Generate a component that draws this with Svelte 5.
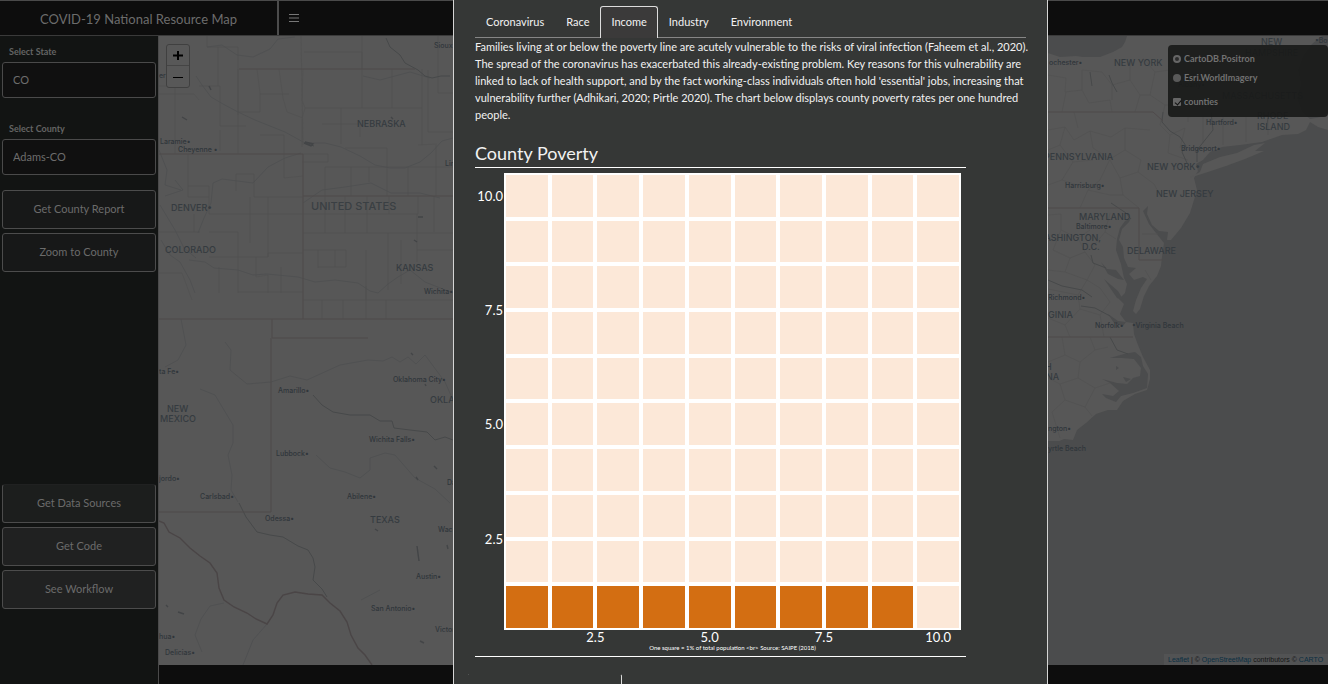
<script>
  const tabs = ['Coronavirus', 'Race', 'Income', 'Industry', 'Environment'];
  let active = $state('Income');

  const cells = Array.from({ length: 100 }, (_, i) => i >= 90 && i < 99);
  const yTicks = [['10.0', 1], ['7.5', 6], ['5.0', 11], ['2.5', 16]];
  const xTicks = [['2.5', 4], ['5.0', 9], ['7.5', 14], ['10.0', 19]];

  // [text, x, y, kind]
  const labels = [
    ['Sioux', 434, 48, 'city'],
    ['er•', 159, 78, 'city'],
    ['NEBRASKA', 357, 127, 'state'],
    ['Laramie•', 160, 144, 'city'],
    ['Cheyenne •', 178, 152, 'city'],
    ['Lincoln', 445, 166, 'city'],
    ['UNITED STATES', 311, 210, 'country'],
    ['DENVER•', 171, 211, 'state'],
    ['COLORADO', 165, 253, 'state'],
    ['KANSAS', 396, 271, 'state'],
    ['Wichita•', 424, 294, 'city'],
    ['ta Fe•', 159, 374, 'city'],
    ['Amarillo•', 278, 393, 'city'],
    ['Oklahoma City•', 393, 382, 'city'],
    ['OKLAHOMA', 430, 403, 'state'],
    ['NEW', 167, 412, 'state'],
    ['MEXICO', 160, 422, 'state'],
    ['Wichita Falls•', 369, 442, 'city'],
    ['Lubbock•', 276, 456, 'city'],
    ['jordo•', 159, 481, 'city'],
    ['Carlsbad•', 200, 499, 'city'],
    ['Abilene•', 347, 499, 'city'],
    ['Dallas', 447, 485, 'city'],
    ['Odessa•', 265, 521, 'city'],
    ['TEXAS', 370, 523, 'state'],
    ['Waco', 438, 532, 'city'],
    ['Austin•', 416, 579, 'city'],
    ['San Antonio•', 371, 611, 'city'],
    ['Victoria', 435, 632, 'city'],
    ['hua•', 159, 639, 'city'],
    ['Delicias•', 165, 655, 'city'],
    ['ochester•', 1049, 65, 'city'],
    ['NEW YORK', 1114, 66, 'state'],
    ['NEW', 1261, 45, 'state'],
    ['HAMPSHIRE', 1245, 56, 'state'],
    ['•Boston', 1315, 43, 'city'],
    ['Albany•', 1178, 87, 'city'],
    ['MASSACHUSETTS', 1222, 99, 'state'],
    ['RHODE', 1257, 119, 'state'],
    ['ISLAND', 1257, 130, 'state'],
    ['Hartford•', 1206, 125, 'city'],
    ['Bridgeport•', 1181, 151, 'city'],
    ['PENNSYLVANIA', 1044, 160, 'state'],
    ['NEW YORK•', 1147, 170, 'state'],
    ['Harrisburg•', 1065, 188, 'city'],
    ['NEW JERSEY', 1156, 197, 'state'],
    ['MARYLAND', 1079, 220, 'state'],
    ['Baltimore•', 1076, 229, 'city'],
    ['WASHINGTON,', 1036, 241, 'state'],
    ['D.C.', 1082, 250, 'state'],
    ['DELAWARE', 1127, 254, 'state'],
    ['Richmond•', 1048, 300, 'city'],
    ['GINIA', 1048, 318, 'state'],
    ['Norfolk•', 1095, 328, 'city'],
    ['•Virginia Beach', 1132, 328, 'city'],
    ['H', 1045, 370, 'state'],
    ['NA', 1046, 380, 'state'],
    ['ngton•', 1048, 431, 'city'],
    ['yrtle Beach', 1048, 451, 'city']
  ];
</script>

<div class="app">
  <header>
    <h1>COVID-19 National Resource Map</h1>
    <button class="menu" aria-label="Toggle sidebar">
      <svg viewBox="0 0 10 8" width="10" height="8"><path d="M0 .5H10M0 4H10M0 7.5H10" /></svg>
    </button>
  </header>

  <div class="body">
    <aside>
      <label for="state">Select State</label>
      <select id="state"><option>CO</option></select>
      <label for="county">Select County</label>
      <select id="county"><option>Adams-CO</option></select>
      <div class="stack">
        <button>Get County Report</button>
        <button>Zoom to County</button>
      </div>
      <div class="stack low">
        <button>Get Data Sources</button>
        <button>Get Code</button>
        <button>See Workflow</button>
      </div>
    </aside>

    <main>
      <svg class="map" viewBox="159 36 1169 629" preserveAspectRatio="xMinYMin slice">
        <rect x="159" y="36" width="1169" height="629" fill="#4b4c4d" />
        <path
          class="land"
          d="M159 36H1048V53L1060 57L1076 56L1083 57L1100 57L1113 52L1122 47L1125 42L1127 36H1322L1312 44L1303 56L1298 70L1301 84L1297 98L1302 112L1310 119L1321 117L1328 112V130L1318 127L1310 122L1306 130L1298 134L1282 135L1262 142L1240 145L1222 147L1210 152L1203 160L1196 164L1198 171L1194 178L1197 190L1194 200L1190 213L1181 228L1171 240L1167 240L1168 232L1159 231L1152 225L1147 214L1148 206L1143 211L1149 224L1156 233L1164 243L1162 257L1161 266L1157 276L1149 286L1144 296L1140 309L1136 314L1133 311L1136 300L1141 288L1147 279L1143 277L1134 280L1129 274L1136 268L1128 267L1124 258L1123 247L1119 240L1122 229L1129 222L1131 218L1125 221L1120 228L1117 239L1116 250L1121 264L1124 278L1127 284L1125 293L1119 299L1124 304L1120 314L1126 322L1133 323L1134 334L1138 345L1143 357L1150 370L1150 379L1147 390L1135 394L1123 401L1117 410L1108 410L1096 414L1086 423L1077 430L1073 440L1064 439L1055 443L1048 441V665H159Z"
        />
        <path class="land" d="M1189 178L1200 172L1203 164L1220 157L1237 153L1254 145L1265 143L1255 151L1264 151L1245 159L1226 166L1208 172Z" />
        <path
          class="water"
          d="M1110 358L1124 354L1135 352L1141 357L1143 366L1148 374L1147 388L1133 393L1121 396L1116 402L1106 398L1102 394L1113 396L1119 391L1110 383L1102 379L1117 383L1127 384L1133 378L1140 376L1141 368L1134 359L1122 358ZM1123 377L1131 379L1126 382ZM1116 366L1119 368L1116 370ZM1101 262L1107 269L1116 270L1124 280L1118 279L1108 274ZM1104 279L1118 291L1124 301L1117 298ZM1108 314L1118 321L1126 322L1123 326L1114 323Z"
        />
        <rect x="1048" y="441" width="280" height="224" fill="#4b4c4d" />

        <path
          class="tract"
          d="M207 36V47H238M238 47V115M159 86H175V154M159 94H194L199 100M218 47V86M199 86H220V126H246M220 130V151M238 69V154M257 69L260 93V112H238M279 69L283 98L287 112L303 118M260 94H289M260 135H284V154M304 52H362V69M301 36L303 145M362 36V69M303 69L302 100L305 108H422V69M305 108L302 119V147M341 108V144M322 124H360V137M362 69V108M392 69V108M345 148H387V167M422 108V145M303 154H328V162H302M325 167V196M351 167V196M369 167V182M387 167V196M408 167V196M438 36V93M438 93H453M428 70V132H453M436 145V196M418 145L437 144M325 167H453M303 214H418V196M325 196V233M345 196V233M367 196V233M389 196V214M303 233H453M417 214V262M434 196V232M318 250V268M335 250V267M303 250H346V267H318M366 250V300M388 233V290M401 240V284M417 250H453M303 300H453M322 300V319M343 300V319M366 286V319M386 300V319M188 154V186H209M236 174V191M236 174H254V197H303M284 154V178L303 176M188 186V197H209M209 186V214H303M250 197V243M194 214V232M209 232H238V293M159 232H200M209 257H268V253H303M256 257V277L268 275V293M238 292H303M268 197V257M281 267V293M159 273H182L192 300M219 267V293M274V267H303M175 293L186 302V319M197 300V348M198 349L238 350V319M240 319V349M260 355V384M195 365H224L245 385H271M177 319V352M169 365V396H199V426H167M199 400L220 393L237 389V413H271M159 413V426M212 414V469H198V462H185V459M212 413H236M212 436H271M180 426V447L176 462V500M246 436L246 452L271 453M159 456H166V500M198 469V510M214 476V492H271M231 476H271M249 452V476M299 338V425M334 338V412M350 338V395M271 357H367V424M271 374H341M271 390H350M271 408H334M341 374V390M299 425H271M285 407V425M317 407V425M334 390V425H402M317 425V529M341 425V525M350 425V470M360 425V520M385 425V510M271 442H453M302 442V460M271 460H420M292 460V478M271 478H385M271 496H453M271 510H350M285 510V526H303M329 510V538H346V547M303 510V547H360M367 424V440M385 442V425M368 319V395H403V380M390 340V385M404 319V365M421 319V366M368 335H453M368 352H420M385 360V412M393 345H453M368 368H403M372 405H402V417M418 405V431M430 420V440M402 442V510M420 442V500M438 440V496M385 496V526H420M402 510V527H418V547H385M361 520V580M341 547V567H360M361 547H398V567M379 547V573M360 567H402V580H372M390 570V581H413M347 600V665M387 600V665M347 620H405M347 636H387M360 653H387M405 620V653H387M418 547L430 560L420 575L402 580M402 580L413 600H453M430 560L453 555M413 600L405 620L420 640L412 650L430 665M420 575L430 590L453 587M430 527L440 540L430 550M404 600L427 608L437 625L453 617M420 510L431 525L453 518M438 496L427 510L440 527M177 513V530M238 513V547L213 566M213 566L248 572V613M213 562L238 547L256 558L278 572L294 555V537M256 558L278 546M294 566H308M278 572L313 580M361 580L347 600H330"
        />
        <path
          class="tract"
          d="M1048 75L1066 78L1065 92L1082 90V70L1102 72L1112 85L1130 80V60M1082 90L1089 103L1110 100L1112 112M1066 92L1062 112M1130 80L1140 95L1135 112M1112 85V100M1143 58L1155 72L1170 70M1155 72L1150 95L1165 105L1160 125M1140 95H1150M1048 130L1065 127L1074 140L1090 131L1111 137L1125 128L1150 130M1074 112L1078 128M1065 127L1060 145L1048 150M1090 131L1093 148L1110 159L1125 150V128M1110 159L1100 180L1088 190L1080 208M1125 150L1141 160L1138 172L1120 178L1110 160M1138 172L1154 184L1160 195M1120 178L1123 195L1139 208M1088 190L1110 195L1123 195M1060 145L1073 162L1062 180L1048 185M1073 162L1093 160M1062 180L1080 186M1165 105H1188V122M1170 70L1178 90M1188 117L1215 113M1203 113V143M1223 113V145M1160 125L1170 135L1185 128L1180 148M1170 135L1168 153L1188 160M1246 110V142M1268 107V135M1205 65L1210 80M1048 215L1061 214V230L1078 238L1090 230M1061 230L1053 250L1070 258L1065 272L1048 270M1070 258L1085 252L1095 265L1087 280L1065 272M1078 238L1085 252M1110 213L1105 232L1116 239M1105 232L1090 250M1087 280L1100 288L1110 302L1100 315L1080 309L1078 295L1087 280M1048 289L1078 295M1100 315L1104 337M1080 309L1065 325L1070 337M1048 318L1065 325M1062 337L1065 355L1080 362L1095 350L1090 337M1080 362L1078 378L1095 388L1110 383M1065 355L1048 362M1078 378L1060 384L1048 378M1060 384L1065 400L1085 407L1095 388M1065 400L1052 412L1060 438M1085 407L1092 416M1095 350L1108 347M1142 234H1158M1145 270L1151 280"
        />
        <path
          class="creek"
          d="M159 150L167 170L165 185L181 190M175 180L183 190L165 196M160 205L175 230L184 248L196 258M161 240L170 255L180 262L190 280L195 293M198 233L204 218L211 203L213 183L222 179L253 183L268 167L285 158L301 153M189 260L205 262L214 268L238 270L253 275L267 274L298 277L315 282L335 280L358 283L370 291L378 293L388 284L398 277L410 270L425 282L453 293M303 203L322 190L345 187L371 183L391 193L420 193L440 198M196 76L202 85L211 97L223 104L238 112L255 120L270 126L285 132L305 143L325 143L341 147L360 156L375 165L390 168L405 168L420 162L431 153L442 141L453 138M181 319L186 345L178 360L165 367M225 342L231 350L230 370L247 384L271 382L290 376L307 380L340 365L368 360L383 361L392 357L400 362L408 357L416 364L425 355L445 382L453 400M200 389L215 395L221 405L233 425L233 443L228 455L232 475L231 490L238 502M316 455L330 468L345 472L360 478L370 470L370 458L385 453L395 455L415 478L435 489L450 503M207 47L222 45L237 55L253 57L270 49L278 39L295 37M363 76L380 80L410 72L430 78M224 603L210 606L201 619L195 635L202 652M267 624L253 640L243 665M361 600L380 590"
        />
        <path
          class="river"
          d="M386 38L390 47L400 55L405 63L418 70L425 76L432 78L441 76L450 76M239 503L246 517L257 532L270 535L283 537L298 546L308 550L313 558L315 567L313 580L322 589L327 597M313 395L322 405L333 412L350 415L370 415L380 421L392 421L394 428L410 430L427 432L435 440L445 437L453 440M305 143L314 146M1163 112L1162 122L1170 131L1180 137L1186 146L1182 152L1187 163M1111 203L1126 213L1131 219M1091 255L1093 263L1106 268M1048 280L1062 286L1082 290L1092 297M1081 306L1095 308L1110 316M1110 337L1117 350L1128 354M1109 75L1112 83L1117 92M1090 72L1092 86M1211 112L1213 130L1197 150L1197 162M1268 118L1266 130"
        />
        <path
          class="lake"
          d="M464 144L470 147M305 142L313 144L311 146L304 143M182 117L187 120M411 353L413 355M425 384L426 386M434 466L437 469M416 477L418 480M417 546L419 561M375 529L378 531M178 612L184 614M166 605L168 607M420 641L424 643M447 545L448 549M418 217H423M414 240L417 242M209 86L211 90M391 117L393 119"
        />
        <path class="border" d="M239 69H415M159 154H303V196H453M303 196V319M159 319H453M272 319V338M272 338H368M271 338V512H159M1048 112H1153L1163 121M1048 208H1139V260H1163M1048 337H1133" />
        <path
          class="rio"
          d="M159 521L164 523L169 532L180 538L190 548L200 556L210 563L217 573L219 588L224 600L234 607L247 613L256 619L267 624L273 615L277 603L283 595L295 592L308 594L322 595L330 603L340 611L347 622L351 635L358 648L365 655L372 665"
        />
        {#each labels as [text, x, y, kind]}
          <text class={kind} {x} {y}>{text}</text>
        {/each}
      </svg>

      <div class="zoom">
        <button aria-label="Zoom in"><svg viewBox="0 0 10 10" width="10" height="10"><path d="M5 1V10M0 5.5H10" /></svg></button>
        <button aria-label="Zoom out"><svg viewBox="0 0 10 10" width="10" height="10"><path class="thin" d="M0 5.5H10" /></svg></button>
      </div>

      <form class="layers">
        <label><input type="radio" name="base" checked />CartoDB.Positron</label>
        <label><input type="radio" name="base" />Esri.WorldImagery</label>
        <label class="over"><input type="checkbox" checked />counties</label>
      </form>

      <p class="credit"><a href="#leaflet">Leaflet</a> | © <a href="#osm">OpenStreetMap</a> contributors © <a href="#carto">CARTO</a></p>
    </main>
  </div>

  <div class="overlay">
    <section class="report">
      <nav>
        {#each tabs as tab}
          <button class:active={tab === active} onclick={() => (active = tab)}>{tab}</button>
        {/each}
      </nav>
      <p class="intro">
        Families living at or below the poverty line are acutely vulnerable to the risks of viral infection (Faheem et al., 2020).
        The spread of the coronavirus has exacerbated this already-existing problem. Key reasons for this vulnerability are
        linked to lack of health support, and by the fact working-class individuals often hold 'essential' jobs, increasing that
        vulnerability further (Adhikari, 2020; Pirtle 2020). The chart below displays county poverty rates per one hundred
        people.
      </p>
      <h2>County Poverty</h2>
      <figure>
        <div class="yaxis">
          {#each yTicks as [text, line]}
            <span style="grid-row: {line} / span 2">{text}</span>
          {/each}
        </div>
        <div class="waffle">
          {#each cells as filled}
            <i class:filled></i>
          {/each}
        </div>
        <div class="xaxis">
          {#each xTicks as [text, line]}
            <span style="grid-column: {line} / span 2">{text}</span>
          {/each}
        </div>
        <figcaption>One square = 1% of total population &lt;br&gt; Source: SAIPE (2018)</figcaption>
      </figure>
      <button class="next" aria-label="Download"></button>
    </section>
  </div>
</div>

<style>
  :global(body) {
    background: #0d0d0d;
    overflow: hidden;
  }
  .app,
  .app * {
    box-sizing: border-box;
  }
  .app {
    position: relative;
    display: flex;
    flex-direction: column;
    height: 100vh;
    font-family: Lato, sans-serif;
    font-size: 11px;
    color: #777;
  }
  button,
  select,
  input {
    font: inherit;
    color: inherit;
    margin: 0;
  }
  button {
    cursor: pointer;
  }

  header {
    display: flex;
    flex: none;
    height: 36px;
    background: #0d0d0d;
    border-top: 1px solid #4a4a4a;
    border-bottom: 1px solid #3a3a3a;
  }
  h1 {
    width: 279px;
    margin: 0;
    border-right: 2px solid #4c4c4c;
    font-size: 13px;
    font-weight: 400;
    line-height: 37px;
    text-align: center;
    color: #6c6c6c;
  }
  .menu {
    display: flex;
    align-items: center;
    padding: 0 10px;
    border: 0;
    background: none;
  }
  .menu path {
    stroke: #777;
  }

  .body {
    display: flex;
    flex: 1;
    min-height: 0;
  }
  aside {
    display: flex;
    flex: none;
    flex-direction: column;
    width: 159px;
    padding: 8px 2px 75px;
    border-right: 1px solid #4a4a4a;
    background: #121413;
  }
  aside label {
    padding: 0 7px;
    font-size: 9px;
    font-weight: 700;
    line-height: 16px;
    margin-bottom: 2px;
    color: #646464;
  }
  select {
    appearance: none;
    height: 36px;
    padding: 0 10px 2px;
    border: 1px solid #4a4a4a;
    border-radius: 3px;
    background: #101010;
    color: #6d6d6d;
  }
  aside select + label {
    margin-top: 23px;
  }
  .stack {
    display: flex;
    flex-direction: column;
    gap: 4px;
    margin-top: 15px;
  }
  .stack button {
    height: 39px;
    padding: 0 0 2px;
    border: 1px solid #4c4c4c;
    border-radius: 3px;
    background: #171818;
    color: #6b6b6b;
  }
  .stack.low {
    margin-top: auto;
  }
  .low button {
    background: #202121;
  }
  .low button:first-child {
    border-top-color: #202121;
    background: #1c1e1d;
  }

  main {
    position: relative;
    flex: 1;
    min-width: 0;
    margin-bottom: 19px;
    overflow: hidden;
    background: #4b4c4d;
  }
  .map {
    display: block;
    width: 100%;
    height: 100%;
  }
  .land {
    fill: #575757;
  }
  .water {
    fill: #4b4c4d;
    fill-rule: evenodd;
  }
  .tract {
    fill: none;
    stroke: #525252;
    stroke-width: 0.8;
  }
  .creek {
    fill: none;
    stroke: #4e4f50;
    stroke-width: 0.8;
  }
  .river {
    fill: none;
    stroke: #47494a;
    stroke-width: 1;
  }
  .lake {
    fill: none;
    stroke: #434547;
    stroke-width: 1.4;
  }
  .border {
    fill: none;
    stroke: #4f4a4b;
  }
  .rio {
    fill: none;
    stroke: #4a4546;
    stroke-width: 1.4;
  }
  .map text {
    font-family: Inter, sans-serif;
    fill: #30363b;
  }
  .map .city {
    font-size: 7px;
    font-weight: 500;
  }
  .map .state {
    font-size: 9px;
    font-weight: 500;
    fill: #353b40;
  }
  .map .country {
    font-size: 11px;
    font-weight: 500;
    fill: #3a3f43;
  }

  .zoom {
    position: absolute;
    top: 8px;
    left: 7px;
    display: flex;
    flex-direction: column;
    width: 24px;
    border: 1px solid #404040;
    border-radius: 3px;
    background: #585858;
  }
  .zoom button {
    display: grid;
    place-items: center;
    height: 20px;
    padding: 0;
    border: 0;
    background: none;
  }
  .zoom button + button {
    height: 22px;
    border-top: 1px solid #454545;
  }
  .zoom path {
    stroke: #000;
    stroke-width: 2;
  }
  .zoom .thin {
    stroke-width: 1;
  }

  .layers {
    position: absolute;
    top: 9px;
    right: 0;
    display: flex;
    flex-direction: column;
    width: 160px;
    padding: 4px 5px 6px;
    border-radius: 4px;
    background: rgb(24 25 24 / 0.9);
    font-size: 9px;
    font-weight: 700;
    color: #717171;
  }
  .layers label {
    display: flex;
    align-items: center;
    gap: 3px;
    height: 19px;
  }
  .layers .over {
    margin-top: 5px;
  }
  .layers input {
    appearance: none;
    position: relative;
    width: 8px;
    height: 8px;
    background: #595959;
  }
  .layers [type='radio'] {
    border-radius: 50%;
  }
  .layers [type='radio']:checked {
    border: 2px solid #666;
    background: #2c2c2c;
  }
  .layers [type='checkbox'] {
    border-radius: 1px;
    background: #666;
  }
  .layers [type='checkbox']::after {
    content: '';
    position: absolute;
    left: 3px;
    top: 1px;
    width: 3px;
    height: 5px;
    border: solid #111;
    border-width: 0 1px 1px 0;
    transform: rotate(40deg);
  }
  .credit {
    position: absolute;
    right: 0;
    bottom: 0;
    width: 164px;
    height: 11px;
    margin: 0;
    padding-left: 4px;
    overflow: hidden;
    background: #525354;
    font-family: 'Liberation Sans', sans-serif;
    font-size: 7px;
    line-height: 11px;
    white-space: nowrap;
    color: #151515;
  }
  .credit a {
    color: #0a2e42;
    text-decoration: none;
  }

  .overlay {
    position: absolute;
    inset: 0;
    display: grid;
    grid-template-columns: 453fr 595fr 280fr;
    overflow: hidden;
    pointer-events: none;
  }
  .report {
    grid-column: 2;
    padding: 6px 21px 0;
    border: solid #d5d5d5;
    border-width: 0 1px;
    background: #353736;
    color: #f2f2f2;
    pointer-events: auto;
  }
  nav {
    display: flex;
    height: 32px;
    border-bottom: 1px solid #868686;
  }
  nav button {
    height: 32px;
    padding: 0 10px 2px;
    border: 1px solid transparent;
    border-bottom: 0;
    border-radius: 3px 3px 0 0;
    background: none;
  }
  nav .active {
    border-color: #dcdcdc;
    background: #3b3a3a;
  }
  .intro {
    margin: 0 -10px 0 0;
    line-height: 17px;
  }
  h2 {
    max-width: 491px;
    margin: 13px 0 0;
    padding: 6px 0 3px;
    border-bottom: 1px solid #fff;
    font-size: 18px;
    font-weight: 400;
    line-height: 22px;
  }
  figure {
    display: grid;
    grid-template-columns: 29px 1fr;
    max-width: 491px;
    margin: 0;
    padding: 5px 5px 4px 0;
    border-bottom: 1px solid #fff;
    font-size: 13px;
    color: #fff;
  }
  .yaxis {
    display: grid;
    grid-template-rows: repeat(20, 1fr);
    align-items: center;
    justify-items: end;
    padding-right: 1px;
  }
  .waffle {
    display: grid;
    grid-template-columns: repeat(10, 1fr);
    gap: 4px;
    padding: 2px;
    aspect-ratio: 1;
    background: #fff;
  }
  .waffle i {
    background: #fce8d8;
  }
  .waffle .filled {
    background: #d36e12;
  }
  .xaxis {
    grid-column: 2;
    display: grid;
    grid-template-columns: repeat(20, 1fr);
    justify-items: center;
    line-height: 14px;
  }
  figcaption {
    grid-column: 2;
    font-size: 6px;
    line-height: 8px;
    text-align: center;
  }
  .next {
    display: block;
    width: 154px;
    height: 32px;
    margin: 17px 0 0 -7px;
    border: 1px solid transparent;
    border-right-color: #dcdcdc;
    border-radius: 2px;
    background: linear-gradient(#8a8a8a, #8a8a8a) 0 0 / 1px 1px no-repeat border-box;
  }
</style>
